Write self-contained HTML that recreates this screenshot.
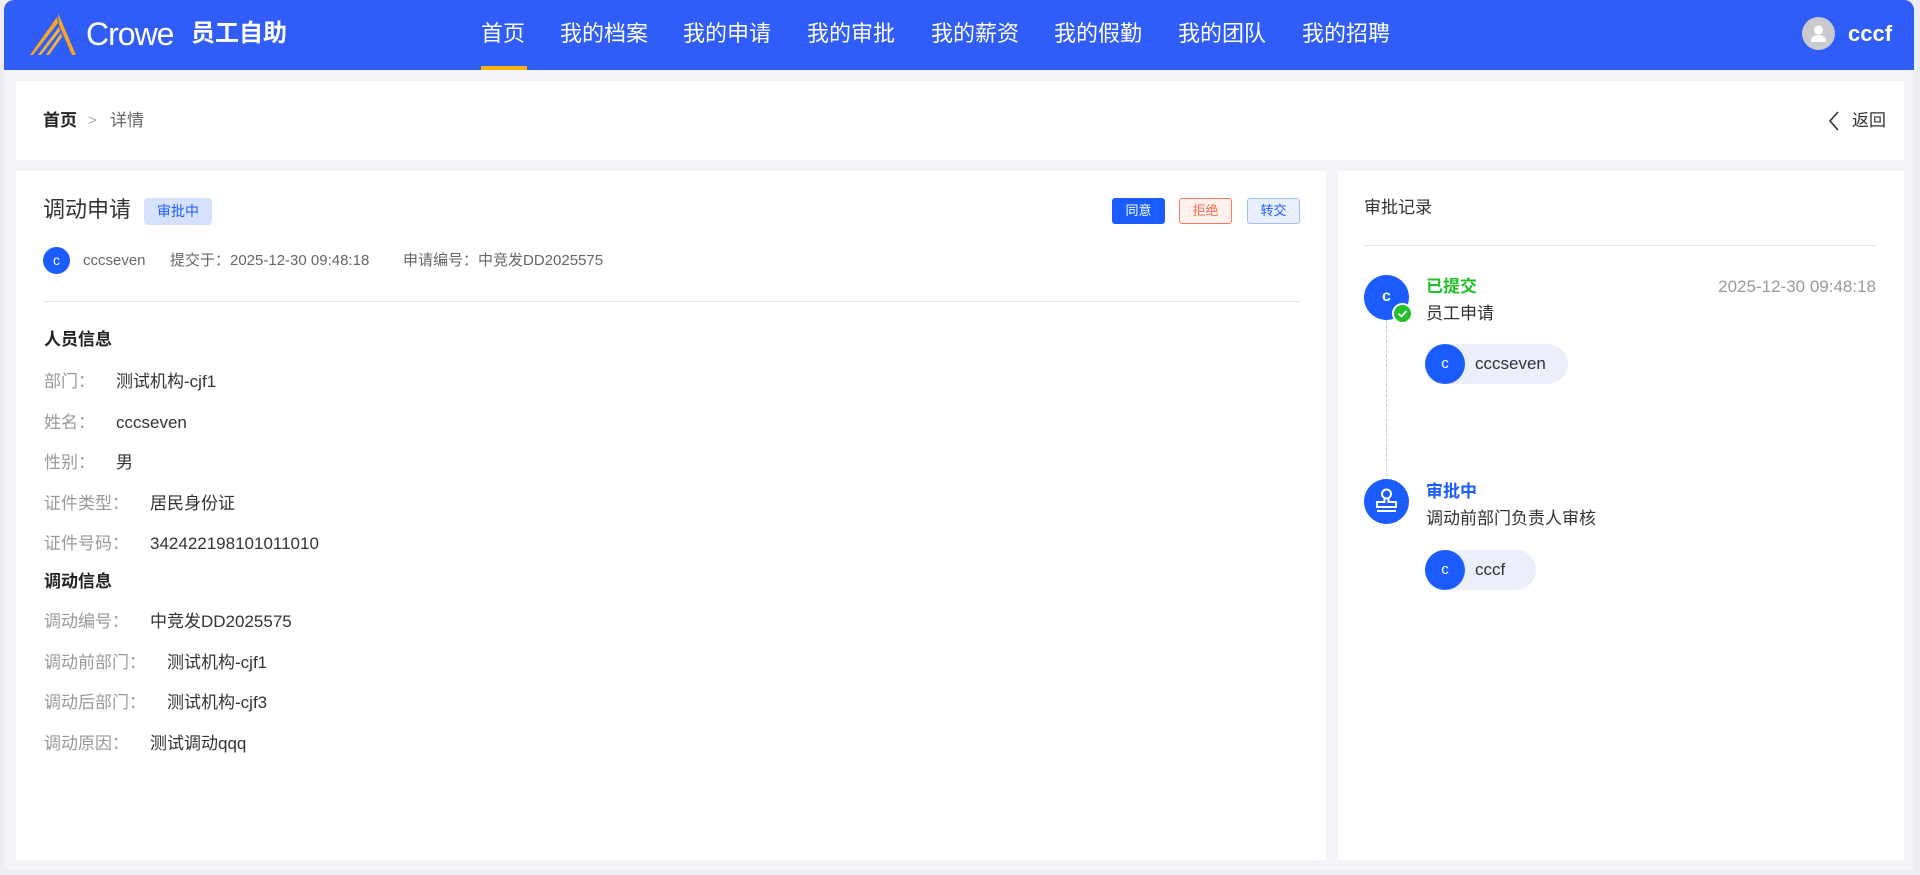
<!DOCTYPE html>
<html><head><meta charset="utf-8"><style>
*{margin:0;padding:0;box-sizing:border-box}
body{width:1920px;height:875px;background:#eceef2;font-family:"Liberation Sans","Noto Sans CJK SC",sans-serif;position:relative;overflow:hidden;color:#333}
.abs{position:absolute}
.frame{left:4px;top:0;width:1910px;height:870px;background:#f3f4f8;border-radius:10px 10px 0 0;overflow:hidden}
.hdr{left:4px;top:0;width:1910px;height:70px;background:#305cf7;border-radius:10px 10px 0 0}
.nav{top:17px;font-size:22px;color:#fff;line-height:34px}
.card{background:#fff}
.lbl{color:#999}
.row{position:absolute;left:44px;font-size:17px;line-height:24px;white-space:nowrap}
.row .lbl{margin-right:21px}
.btn{position:absolute;top:198px;height:26px;width:53px;border-radius:3px;font-size:13px;line-height:24px;text-align:center}
</style></head><body>
<div class="abs frame"></div>
<div class="abs hdr"></div>
<svg class="abs" style="left:28px;top:13px" width="48" height="42" viewBox="0 0 48 42">
<path d="M30 0 L48 42 L44 42 L31 12 Z" fill="#f5a623"/>
<path d="M29 4 L2 42 L5 42 L30 10 Z" fill="#f5a623"/>
<path d="M31 14 L10 42 L13 42 L32 18 Z" fill="#f0b43c"/>
<path d="M33 20 L18 42 L21 42 L34 24 Z" fill="#f0b43c"/>
</svg>
<div class="abs" style="left:86px;top:14px;font-size:32px;color:#fff;line-height:40px;letter-spacing:-1px">Crowe</div>
<div class="abs" style="left:191px;top:18px;font-size:24px;color:#fff;font-weight:bold;line-height:32px">员工自助</div>
<div class="abs nav" style="left:481px">首页</div>
<div class="abs" style="left:481px;top:66px;width:46px;height:4px;background:#f7b500"></div>
<div class="abs nav" style="left:560px">我的档案</div>
<div class="abs nav" style="left:683px">我的申请</div>
<div class="abs nav" style="left:807px">我的审批</div>
<div class="abs nav" style="left:931px">我的薪资</div>
<div class="abs nav" style="left:1054px">我的假勤</div>
<div class="abs nav" style="left:1178px">我的团队</div>
<div class="abs nav" style="left:1302px">我的招聘</div>
<div class="abs" style="left:1802px;top:17px;width:33px;height:33px;border-radius:50%;background:#c8cad0"></div>
<svg class="abs" style="left:1802px;top:17px" width="33" height="33" viewBox="0 0 33 33"><circle cx="16.5" cy="13" r="4.5" fill="#fff"/><path d="M9 25 Q9 18 16.5 18 Q24 18 24 25 Z" fill="#fff"/></svg>
<div class="abs" style="left:1848px;top:20px;font-size:22px;font-weight:bold;color:#fff;line-height:28px">cccf</div>

<div class="abs card" style="left:16px;top:81px;width:1888px;height:79px"></div>
<div class="abs" style="left:43px;top:109px;font-size:17px;line-height:24px;font-weight:bold;color:#222">首页</div>
<div class="abs" style="left:88px;top:109px;font-size:15px;line-height:24px;color:#aaa">&gt;</div>
<div class="abs" style="left:110px;top:109px;font-size:17px;line-height:24px;color:#666">详情</div>
<svg class="abs" style="left:1827px;top:111px" width="14" height="20" viewBox="0 0 14 20"><path d="M11 1 L3 10 L11 19" stroke="#333" stroke-width="1.6" fill="none"/></svg>
<div class="abs" style="left:1852px;top:109px;font-size:17px;line-height:24px;color:#333">返回</div>

<div class="abs card" style="left:16px;top:171px;width:1310px;height:689px"></div>
<div class="abs card" style="left:1338px;top:171px;width:566px;height:689px"></div>

<div class="abs" style="left:43px;top:196px;font-size:22px;line-height:28px;color:#333">调动申请</div>
<div class="abs" style="left:144px;top:198px;width:68px;height:27px;border-radius:4px;background:#d6e1ff;color:#1a5cff;font-size:14px;line-height:27px;text-align:center">审批中</div>
<div class="btn" style="left:1112px;background:#1a5cff;color:#fff;border:1px solid #1a5cff">同意</div>
<div class="btn" style="left:1179px;background:#fff1ee;color:#ff6a4d;border:1px solid #ff7a5c">拒绝</div>
<div class="btn" style="left:1247px;background:#e8efff;color:#1a5cff;border:1px solid #9ec0ff">转交</div>

<div class="abs" style="left:43px;top:247px;width:27px;height:27px;border-radius:50%;background:#1a5cff;color:#fff;font-size:14px;line-height:27px;text-align:center">c</div>
<div class="abs" style="left:83px;top:251px;font-size:15px;line-height:20px;color:#666">cccseven</div>
<div class="abs" style="left:170px;top:251px;font-size:15px;line-height:20px;color:#666">提交于：2025-12-30 09:48:18</div>
<div class="abs" style="left:403px;top:251px;font-size:15px;line-height:20px;color:#666">申请编号：中竞发DD2025575</div>
<div class="abs" style="left:43px;top:301px;width:1257px;height:1px;background:#e2e3e8"></div>

<div class="row" style="top:328px;font-weight:bold;color:#222">人员信息</div>
<div class="row" style="top:370px"><span class="lbl">部门：</span>测试机构-cjf1</div>
<div class="row" style="top:411px"><span class="lbl">姓名：</span>cccseven</div>
<div class="row" style="top:451px"><span class="lbl">性别：</span>男</div>
<div class="row" style="top:492px"><span class="lbl">证件类型：</span>居民身份证</div>
<div class="row" style="top:532px"><span class="lbl">证件号码：</span>342422198101011010</div>
<div class="row" style="top:570px;font-weight:bold;color:#222">调动信息</div>
<div class="row" style="top:610px"><span class="lbl">调动编号：</span>中竞发DD2025575</div>
<div class="row" style="top:651px"><span class="lbl">调动前部门：</span>测试机构-cjf1</div>
<div class="row" style="top:691px"><span class="lbl">调动后部门：</span>测试机构-cjf3</div>
<div class="row" style="top:732px"><span class="lbl">调动原因：</span>测试调动qqq</div>

<div class="abs" style="left:1364px;top:196px;font-size:17px;line-height:24px;color:#333">审批记录</div>
<div class="abs" style="left:1364px;top:245px;width:512px;height:1px;background:#e2e3e8"></div>

<div class="abs" style="left:1386px;top:320px;width:0;height:156px;border-left:1.5px dashed #c8c8c8"></div>
<div class="abs" style="left:1364px;top:275px;width:45px;height:45px;border-radius:50%;background:#1a5cff;color:#fff;font-weight:bold;font-size:16px;line-height:43px;text-align:center">c</div>
<div class="abs" style="left:1392px;top:303px;width:21px;height:21px;border-radius:50%;background:#22c02a;border:2px solid #fff"></div>
<svg class="abs" style="left:1392px;top:303px" width="21" height="21" viewBox="0 0 21 21"><path d="M6.5 10.5 L9.5 13.5 L14.5 8" stroke="#fff" stroke-width="1.8" fill="none"/></svg>
<div class="abs" style="left:1426px;top:275px;font-size:17px;line-height:24px;font-weight:bold;color:#22c02a">已提交</div>
<div class="abs" style="left:1600px;top:275px;width:276px;text-align:right;font-size:17px;line-height:24px;color:#999">2025-12-30 09:48:18</div>
<div class="abs" style="left:1426px;top:302px;font-size:17px;line-height:24px;color:#333">员工申请</div>
<div class="abs" style="left:1425px;top:344px;width:143px;height:40px;border-radius:20px;background:#eceef9"></div>
<div class="abs" style="left:1425px;top:344px;width:40px;height:40px;border-radius:50%;background:#1a5cff;color:#fff;font-size:15px;line-height:40px;text-align:center">c</div>
<div class="abs" style="left:1475px;top:352px;font-size:17px;line-height:24px;color:#333">cccseven</div>

<div class="abs" style="left:1364px;top:479px;width:45px;height:45px;border-radius:50%;background:#1a5cff"></div>
<svg class="abs" style="left:1364px;top:479px" width="45" height="45" viewBox="0 0 45 45"><circle cx="22.5" cy="15" r="4.5" stroke="#fff" stroke-width="2" fill="none"/><path d="M20.5 19 L20.5 23 L13 23 L13 28 L32 28 L32 23 L24.5 23 L24.5 19" stroke="#fff" stroke-width="2" fill="none"/><path d="M13 32 L32 32" stroke="#fff" stroke-width="2"/></svg>
<div class="abs" style="left:1426px;top:480px;font-size:17px;line-height:24px;font-weight:bold;color:#1a5cff">审批中</div>
<div class="abs" style="left:1426px;top:507px;font-size:17px;line-height:24px;color:#333">调动前部门负责人审核</div>
<div class="abs" style="left:1425px;top:550px;width:111px;height:40px;border-radius:20px;background:#eceef9"></div>
<div class="abs" style="left:1425px;top:550px;width:40px;height:40px;border-radius:50%;background:#1a5cff;color:#fff;font-size:15px;line-height:40px;text-align:center">c</div>
<div class="abs" style="left:1475px;top:558px;font-size:17px;line-height:24px;color:#333">cccf</div>
</body></html>
